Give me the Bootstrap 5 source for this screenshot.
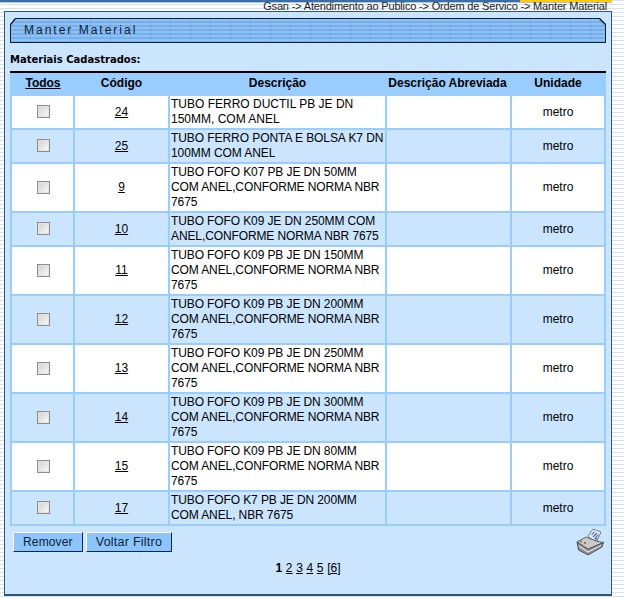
<!DOCTYPE html>
<html lang="pt">
<head>
<meta charset="utf-8">
<title>Manter Material</title>
<link href="https://cdn.jsdelivr.net/npm/bootstrap@5.3.0/dist/css/bootstrap.min.css" rel="stylesheet">
<style>
html, body { height: 598px; overflow: hidden; }
body { margin: 0; font-family: "Liberation Sans", Arial, sans-serif; font-size: 12px; color: #000;
  background: repeating-linear-gradient(to bottom, #cfe3f5 0 1px, #ffffff 1px 4px); }
.page-shell { height: 598px; display: flex; flex-direction: column; }
.top-rule { height: 3px; flex: none; margin-right: 12px; background: linear-gradient(to bottom, #3a6ea5 0 2px, #a9c6e3 2px 3px); position: relative; }
.sun-rule { position: absolute; right: 0; top: 0; width: 92px; height: 2px; background: #ffc90e; }
.crumb-bar { height: 8px; flex: none; text-align: right; padding-right: 17px; font-size: 11px; letter-spacing: -.17px; line-height: 7px; color: #222; white-space: nowrap; overflow: visible; position: relative; }
.panel-main { margin: 0 12px 2px 4px; flex: 1; background: #cbe5ff; border: 1px solid #33537a; border-bottom-width: 2px; padding: 6px 5px 0 5px; }
.title-edge { height: 25px; background: #0a1f38; padding: 1px; clip-path: polygon(5px 0, calc(100% - 6px) 0, 100% 6px, 100% 100%, 0 100%, 0 6px); }
.title-band { height: 23px; clip-path: polygon(5px 0, calc(100% - 6px) 0, 100% 6px, 100% 100%, 0 100%, 0 6px);
  background: repeating-linear-gradient(to right, transparent 0 19px, rgba(70,120,190,.18) 19px 20px), repeating-linear-gradient(to bottom, #8fc1f5 0 2px, #78aeea 2px 4px); padding-left: 13px; line-height: 23px; font-size: 12px; letter-spacing: 2px; color: #0a1f38; }
.list-caption { font-family: "DejaVu Sans", sans-serif; font-weight: 700; font-size: 10px; margin: 10px 0 0 0; height: 18px; line-height: 13px; }
.mat-table { width: 596px; border-collapse: separate; border-spacing: 0; border-top: 2px solid #000; background: #99ccff; table-layout: fixed; }
.mat-table th { height: 23px; text-align: center; font-weight: 700; font-size: 12px; padding: 0 0 3px 0; vertical-align: middle; background: #99ccff; }
.mat-table th:first-child { padding-left: 3px; }
.mat-table th:nth-child(2), .mat-table th:nth-child(3) { padding-left: 2px; }
.mat-table td { padding: 0 0 0 1px; line-height: 15px; vertical-align: middle; border-left: 2px solid #99ccff; border-bottom: 2px solid #99ccff; font-size: 12px; background-clip: padding-box; white-space: nowrap; }
.mat-table td:last-child { border-right: 2px solid #99ccff; }
.mat-table tr.row-white td { background-color: #fff; }
.mat-table tr.row-tint td { background-color: #cbe5ff; }
.mat-table td.mid { text-align: center; padding-left: 0; }
.mat-table td.mid:first-child { padding-left: 1px; }
.mat-table td.tight { letter-spacing: -.11px; }
.mat-table td.tight-soft { letter-spacing: -.07px; }
.mat-table a { color: #000; }
.fake-check { display: inline-block; width: 13px; height: 13px; border: 1px solid #8c8c8c; background: linear-gradient(135deg, #cfcfcf, #fbfbfb); box-shadow: inset 0 0 0 1px #e4e4e4; vertical-align: middle; margin-top: -1px; }
.action-row { display: flex; align-items: flex-start; margin-top: 6px; padding-left: 3px; height: 26px; }
.act-btn { background: #8cc4fb; color: #0a1f38; font-size: 12px; letter-spacing: .15px; line-height: 18px; height: 20px; padding: 0 9px; border: 1px solid; border-color: #fff #0a2a52 #0a2a52 #fff; border-radius: 0; margin-right: 3px; font-family: "Liberation Sans", Arial, sans-serif; }
.act-wide { font-size: 12.5px; letter-spacing: .25px; }
.print-ico { margin-left: auto; margin-top: -4px; margin-right: 2px; }
.pager { text-align: center; font-size: 12px; line-height: 14px; margin-top: 3px; word-spacing: .3px; }
.pager a { color: #000; }
</style>
</head>
<body>
<div class="page-shell">
  <div class="top-rule"><span class="sun-rule"></span></div>
  <div class="crumb-bar">Gsan -&gt; Atendimento ao Publico -&gt; Ordem de Servico -&gt; Manter Material</div>
  <div class="panel-main">
    <div class="title-edge"><div class="title-band">Manter Material</div></div>
    <p class="list-caption">Materiais Cadastrados:</p>
    <table class="mat-table">
      <colgroup><col style="width:63px"><col style="width:95px"><col style="width:217px"><col style="width:125px"><col style="width:96px"></colgroup>
      <thead><tr><th><a href="#">Todos</a></th><th>Código</th><th>Descrição</th><th>Descrição Abreviada</th><th>Unidade</th></tr></thead>
      <tbody>
        <tr class="row-white" style="height:34px"><td class="mid"><span class="fake-check"></span></td><td class="mid"><a href="#">24</a></td><td>TUBO FERRO DUCTIL PB JE DN<br>150MM, COM ANEL</td><td></td><td class="mid">metro</td></tr>
        <tr class="row-tint" style="height:34px"><td class="mid"><span class="fake-check"></span></td><td class="mid"><a href="#">25</a></td><td class="tight-soft">TUBO FERRO PONTA E BOLSA K7 DN<br>100MM COM ANEL</td><td></td><td class="mid">metro</td></tr>
        <tr class="row-white" style="height:49px"><td class="mid"><span class="fake-check"></span></td><td class="mid"><a href="#">9</a></td><td class="tight">TUBO FOFO K07 PB JE DN 50MM<br>COM ANEL,CONFORME NORMA NBR<br>7675</td><td></td><td class="mid">metro</td></tr>
        <tr class="row-tint" style="height:34px"><td class="mid"><span class="fake-check"></span></td><td class="mid"><a href="#">10</a></td><td class="tight">TUBO FOFO K09 JE DN 250MM COM<br>ANEL,CONFORME NORMA NBR 7675</td><td></td><td class="mid">metro</td></tr>
        <tr class="row-white" style="height:49px"><td class="mid"><span class="fake-check"></span></td><td class="mid"><a href="#">11</a></td><td class="tight">TUBO FOFO K09 PB JE DN 150MM<br>COM ANEL,CONFORME NORMA NBR<br>7675</td><td></td><td class="mid">metro</td></tr>
        <tr class="row-tint" style="height:49px"><td class="mid"><span class="fake-check"></span></td><td class="mid"><a href="#">12</a></td><td class="tight">TUBO FOFO K09 PB JE DN 200MM<br>COM ANEL,CONFORME NORMA NBR<br>7675</td><td></td><td class="mid">metro</td></tr>
        <tr class="row-white" style="height:49px"><td class="mid"><span class="fake-check"></span></td><td class="mid"><a href="#">13</a></td><td class="tight">TUBO FOFO K09 PB JE DN 250MM<br>COM ANEL,CONFORME NORMA NBR<br>7675</td><td></td><td class="mid">metro</td></tr>
        <tr class="row-tint" style="height:49px"><td class="mid"><span class="fake-check"></span></td><td class="mid"><a href="#">14</a></td><td class="tight">TUBO FOFO K09 PB JE DN 300MM<br>COM ANEL,CONFORME NORMA NBR<br>7675</td><td></td><td class="mid">metro</td></tr>
        <tr class="row-white" style="height:49px"><td class="mid"><span class="fake-check"></span></td><td class="mid"><a href="#">15</a></td><td class="tight">TUBO FOFO K09 PB JE DN 80MM<br>COM ANEL,CONFORME NORMA NBR<br>7675</td><td></td><td class="mid">metro</td></tr>
        <tr class="row-tint" style="height:34px"><td class="mid"><span class="fake-check"></span></td><td class="mid"><a href="#">17</a></td><td class="tight">TUBO FOFO K7 PB JE DN 200MM<br>COM ANEL, NBR 7675</td><td></td><td class="mid">metro</td></tr>
      </tbody>
    </table>
    <div class="action-row">
      <button type="button" class="btn act-btn">Remover</button>
      <button type="button" class="btn act-btn act-wide">Voltar Filtro</button>
      <svg class="print-ico" width="28" height="28" viewBox="0 0 28 28" aria-hidden="true">
        <path d="M12 8 L17 1 L25 4 L20 15 Z" fill="#e6eef8" stroke="#5c6470" stroke-width=".8"/>
        <path d="M15.5 7 L18.5 3.5 M17 9 L21 5 M18.5 11 L22.5 6.5 M19 13 L21 10" stroke="#3a5fa8" stroke-width="1.1"/>
        <path d="M1 14 L10 9 L20 13 L27.5 14.5 L12 22 Z" fill="#c9c9c9" stroke="#4a4a4a" stroke-width=".8"/>
        <path d="M1 14 L12 21 L27.5 14.5 L26 19 L12 27 L2.5 22 Z" fill="#8f8f8f" stroke="#3a3a3a" stroke-width=".8"/>
        <path d="M3 18 L12 24 L25 17.5" fill="none" stroke="#dedede" stroke-width="1.2"/>
        <circle cx="5" cy="13.5" r="1" fill="#3c9a3c"/><circle cx="9" cy="15" r="1" fill="#d33"/>
      </svg>
    </div>
    <div class="pager"><b>1</b> <a href="#">2</a> <a href="#">3</a> <a href="#">4</a> <a href="#">5</a> <a href="#">[6]</a></div>
  </div>
</div>
<script src="https://cdn.jsdelivr.net/npm/bootstrap@5.3.0/dist/js/bootstrap.bundle.min.js"></script>
</body>
</html>
